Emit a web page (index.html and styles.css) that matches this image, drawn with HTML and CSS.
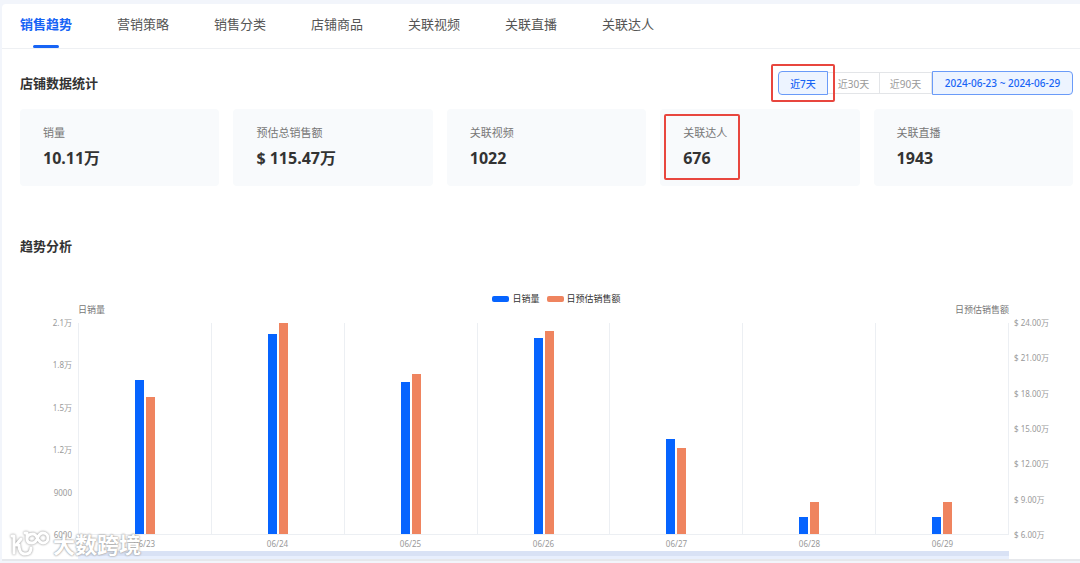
FILE: index.html
```
<!DOCTYPE html>
<html lang="zh-CN">
<head>
  <meta charset="UTF-8" />
  <meta name="viewport" content="width=device-width, initial-scale=1.0" />
  <title>店铺数据统计</title>
  <link rel="stylesheet" href="styles.css">
</head>
<body>
  <main class="page">
    <nav class="tabs">
      <a href="#" class="tab active">销售趋势</a>
      <a href="#" class="tab">营销策略</a>
      <a href="#" class="tab">销售分类</a>
      <a href="#" class="tab">店铺商品</a>
      <a href="#" class="tab">关联视频</a>
      <a href="#" class="tab">关联直播</a>
      <a href="#" class="tab">关联达人</a>
    </nav>

    <section class="stats">
      <div class="stats-head">
        <h2>店铺数据统计</h2>
        <div class="range">
          <button type="button" class="active marked">近7天</button>
          <button type="button">近30天</button>
          <button type="button">近90天</button>
          <button type="button" class="active date">2024-06-23 ~ 2024-06-29</button>
        </div>
      </div>
      <div class="cards">
        <div class="card"><span>销量</span><b>10.11万</b></div>
        <div class="card"><span>预估总销售额</span><b>$ 115.47万</b></div>
        <div class="card"><span>关联视频</span><b>1022</b></div>
        <div class="card marked"><span>关联达人</span><b>676</b></div>
        <div class="card"><span>关联直播</span><b>1943</b></div>
      </div>
    </section>

    <section class="trend">
      <h2>趋势分析</h2>
      <div class="legend">
        <span class="key sales">日销量</span>
        <span class="key amount">日预估销售额</span>
      </div>
      <div class="axis-names">
        <span>日销量</span>
        <span>日预估销售额</span>
      </div>
      <div class="chart">
        <div class="axis left">
          <span>2.1万</span><span>1.8万</span><span>1.5万</span><span>1.2万</span><span>9000</span><span>6000</span>
        </div>
        <div class="plot">
          <div class="day"><i class="bar sales" style="height: 73%"></i><i class="bar amount" style="height: 65%"></i></div>
          <div class="day"><i class="bar sales" style="height: 95%"></i><i class="bar amount" style="height: 100%"></i></div>
          <div class="day"><i class="bar sales" style="height: 72%"></i><i class="bar amount" style="height: 76%"></i></div>
          <div class="day"><i class="bar sales" style="height: 93%"></i><i class="bar amount" style="height: 96%"></i></div>
          <div class="day"><i class="bar sales" style="height: 45%"></i><i class="bar amount" style="height: 41%"></i></div>
          <div class="day"><i class="bar sales" style="height: 8%"></i><i class="bar amount" style="height: 15%"></i></div>
          <div class="day"><i class="bar sales" style="height: 8%"></i><i class="bar amount" style="height: 15%"></i></div>
        </div>
        <div class="axis right">
          <span>$ 24.00万</span><span>$ 21.00万</span><span>$ 18.00万</span><span>$ 15.00万</span><span>$ 12.00万</span><span>$ 9.00万</span><span>$ 6.00万</span>
        </div>
      </div>
      <div class="dates">
        <span>06/23</span><span>06/24</span><span>06/25</span><span>06/26</span><span>06/27</span><span>06/28</span><span>06/29</span>
      </div>
      <div class="scroller"></div>
    </section>

    <div class="watermark">
      <svg width="40" height="30" viewBox="0 0 40 30" fill="none" stroke-linecap="round" stroke-linejoin="round">
        <g class="logo">
          <path d="M3 7H5V24" />
          <path d="M12 10L7 16H10C10 21 12 25 16 25C20 25 22 23 22 19" />
          <path d="M16 4H18V10C18 13 20 14 23 14C30 14 27 4 34 4A5 5 0 0 1 34 14C28 14 29 5 24 5C20 5 18 7 18 10" />
        </g>
      </svg>
      <span>大数跨境</span>
    </div>
  </main>
</body>
</html>
```
FILE: styles.css
```
* {
  box-sizing: border-box;
}
body {
  margin: 0;
  padding: 4px 0 2px 2px;
  background: #f2f5fb;
  color: #333;
  font-family: "Noto Sans", "Noto Sans CJK SC", sans-serif;
}
.page {
  position: relative;
  background: #fff;
  border-bottom: 2px solid #e6e8ec;
  border-top-left-radius: 4px;
}
h2 {
  margin: 0;
  font-size: 13px;
  line-height: 20px;
}

/* tabs */
.tabs {
  display: flex;
  gap: 45px;
  height: 45px;
  padding-left: 18px;
  border-bottom: 1px solid #eef0f3;
}
.tab {
  position: relative;
  color: #555;
  font-size: 13px;
  line-height: 40px;
  text-decoration: none;
}
.tab.active {
  color: #1764f5;
  font-weight: bold;
}
.tab.active::after {
  content: "";
  position: absolute;
  left: 13px;
  right: 13px;
  bottom: 0;
  height: 3px;
  border-radius: 2px;
  background: #1764f5;
}

/* totals */
.stats {
  padding: 21px 7px 0 18px;
}
.stats-head {
  display: flex;
  justify-content: space-between;
  align-items: center;
  height: 26px;
}
.range {
  display: flex;
  align-items: center;
}
.range button {
  width: 52px;
  height: 22px;
  padding: 0;
  border: 1px solid #e3e5e8;
  border-left: 0;
  background: #fff;
  color: #999;
  font-family: inherit;
  font-size: 10px;
}
.range button.active {
  width: 50px;
  height: 24px;
  border: 1px solid #6a9bf8;
  border-radius: 4px 0 0 4px;
  background: #edf4ff;
  color: #1764f5;
  font-weight: 500;
}
.range button.date {
  width: 141px;
  border-radius: 0 4px 4px 0;
}
.marked {
  position: relative;
}
.marked::after {
  content: "";
  position: absolute;
  z-index: 1;
  border: 2px solid #e8463e;
  border-radius: 2px;
}
.range .marked::after {
  inset: -8px;
}
.card.marked::after {
  top: 5px;
  left: 4px;
  width: 76px;
  height: 66px;
  box-sizing: border-box;
}
.cards {
  display: grid;
  grid-template-columns: repeat(5, 1fr);
  gap: 14px;
  margin-top: 13px;
}
.card {
  display: flex;
  flex-direction: column;
  gap: 4px;
  padding: 15px 23px 16px;
  border-radius: 4px;
  background: #f8fafc;
}
.card span {
  color: #777;
  font-size: 11px;
  line-height: 18px;
}
.card b {
  font-size: 16px;
  line-height: 24px;
}

/* trend chart */
.trend {
  padding: 50px 7px 0 18px;
}
.legend {
  display: flex;
  justify-content: center;
  gap: 7px;
  margin-top: 37px;
  padding-left: 20px;
  font-size: 9px;
  line-height: 12px;
}
.key {
  display: flex;
  align-items: center;
  gap: 3px;
}
.key::before {
  content: "";
  width: 17px;
  height: 6px;
  border-radius: 2px;
}
.key.sales::before,
.bar.sales {
  background: #0664ff;
}
.key.amount::before,
.bar.amount {
  background: #ef845f;
}
.axis-names {
  display: flex;
  justify-content: space-between;
  padding: 0 64px 0 58px;
  color: #777;
  font-size: 9px;
  line-height: 10px;
}
.chart {
  display: grid;
  grid-template-columns: 58px 1fr 64px;
  margin-top: 8px;
}
.axis {
  display: flex;
  flex-direction: column;
  justify-content: space-between;
  margin: -6px 0;
  color: #999;
  font-size: 8px;
  line-height: 12px;
}
.axis.left {
  padding-right: 6px;
  text-align: right;
}
.axis.right {
  padding-left: 5px;
}
.plot {
  display: flex;
  height: 212px;
  border-left: 1px solid #eceff3;
  border-bottom: 1px solid #eceff3;
}
.day {
  display: flex;
  flex: 1;
  justify-content: center;
  align-items: flex-end;
  gap: 2px;
  border-right: 1px solid #eceff3;
}
.bar {
  width: 9px;
}
.dates {
  display: flex;
  padding: 0 64px 0 58px;
  margin-top: 3px;
  color: #999;
  font-size: 8px;
  line-height: 12px;
  text-align: center;
}
.dates span {
  flex: 1;
}
.scroller {
  height: 8px;
  margin: 1px 64px 0 58px;
  border-top: 5px solid #d9e2f5;
  background: #e8effd;
}

/* watermark */
.watermark {
  position: absolute;
  left: 7px;
  bottom: 0;
  display: flex;
  align-items: center;
  gap: 4px;
  color: #fff;
  font-size: 22px;
  font-weight: bold;
  line-height: 30px;
  text-shadow: 0 0 2px #999, 0 0 2px #aaa;
}
.watermark svg {
  filter: drop-shadow(0 0 1px #888);
}
.logo {
  stroke: #fff;
  stroke-width: 3;
}
```
